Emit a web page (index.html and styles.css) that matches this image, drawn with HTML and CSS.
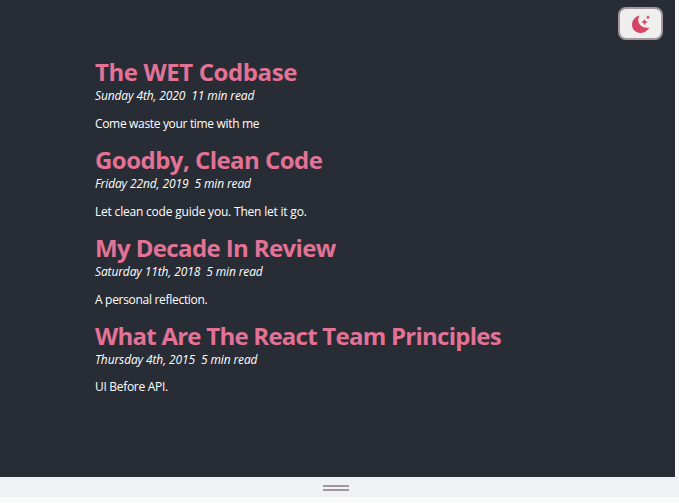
FILE: index.html
```html
<!DOCTYPE html>
<html lang="en">
<head>
<meta charset="utf-8">
<title>Blog</title>
<link rel="stylesheet" href="styles.css">
</head>
<body>
<main class="page">
  <button class="theme-toggle" aria-label="Toggle theme">
    <svg width="20" height="20" viewBox="0 0 20 20" fill="#d84463"><path d="M8.7 1.5C5.4 6.2 7.5 14.8 18.3 13.7C14.8 19.4 7.3 20.6 3.4 16.6C-1.2 11.7 1.2 3 8.7 1.5ZM13.5 4.7L14.5 7L16.8 8L14.5 9L13.5 11.3L12.5 9L10.2 8L12.5 7ZM17 1L17.7 2.5L19.2 3.2L17.7 3.9L17 5.4L16.3 3.9L14.8 3.2L16.3 2.5Z"/></svg>
  </button>
  <article class="post post-wet">
    <h2 class="title">The WET Codbase</h2>
    <p class="meta"><span>Sunday 4th, 2020</span><span>11 min read</span></p>
    <p class="summary">Come waste your time with me</p>
  </article>
  <article class="post post-clean">
    <h2 class="title">Goodby, Clean Code</h2>
    <p class="meta"><span>Friday 22nd, 2019</span><span>5 min read</span></p>
    <p class="summary">Let clean code guide you. Then let it go.</p>
  </article>
  <article class="post post-decade">
    <h2 class="title">My Decade In Review</h2>
    <p class="meta"><span>Saturday 11th, 2018</span><span>5 min read</span></p>
    <p class="summary">A personal reflection.</p>
  </article>
  <article class="post post-react">
    <h2 class="title">What Are The React Team Principles</h2>
    <p class="meta"><span>Thursday 4th, 2015</span><span>5 min read</span></p>
    <p class="summary">UI Before API.</p>
  </article>
</main>
<div class="resize-bar"><span class="grip"></span></div>
</body>
</html>
```
FILE: styles.css
```css
* { box-sizing: border-box; }
body { margin: 0; height: 503px; overflow: hidden; background: #f8faf9; font-family: "Open Sans", "Noto Sans", sans-serif; }
.page { position: relative; width: 675px; height: 477px; padding: 56.4px 95px 0; background: #282c35; }
.theme-toggle { position: absolute; top: 7px; right: 12px; width: 45px; height: 33px; padding: 0; display: flex; align-items: center; justify-content: center; background: #efefef; border: 2px solid #a3969d; border-radius: 8px; }
.post { height: 87.8px; white-space: nowrap; color: #fff; }
.title { margin: 0; font-size: 24px; line-height: 32px; font-weight: 700; color: #e27396; letter-spacing: var(--title-track); }
.meta { margin: 0; display: flex; gap: 6px; font-size: 12px; line-height: 15px; font-style: italic; letter-spacing: -0.12px; }
.summary { margin: 12.6px 0 0; font-size: 12px; line-height: 16px; letter-spacing: var(--text-track); }
.post-wet { --title-track: -0.4px; --text-track: -0.33px; }
.post-clean { --title-track: -0.54px; --text-track: -0.2px; }
.post-decade { --title-track: -0.62px; --text-track: -0.3px; }
.post-react { --title-track: -0.75px; --text-track: -0.3px; }
.resize-bar { height: 20px; display: flex; justify-content: center; align-items: center; background: #eef2f4; padding-right: 7px; }
.grip { width: 26px; height: 6px; margin-top: 2px; border-top: 2px solid #a3969d; border-bottom: 2px solid #a3969d; }
```
